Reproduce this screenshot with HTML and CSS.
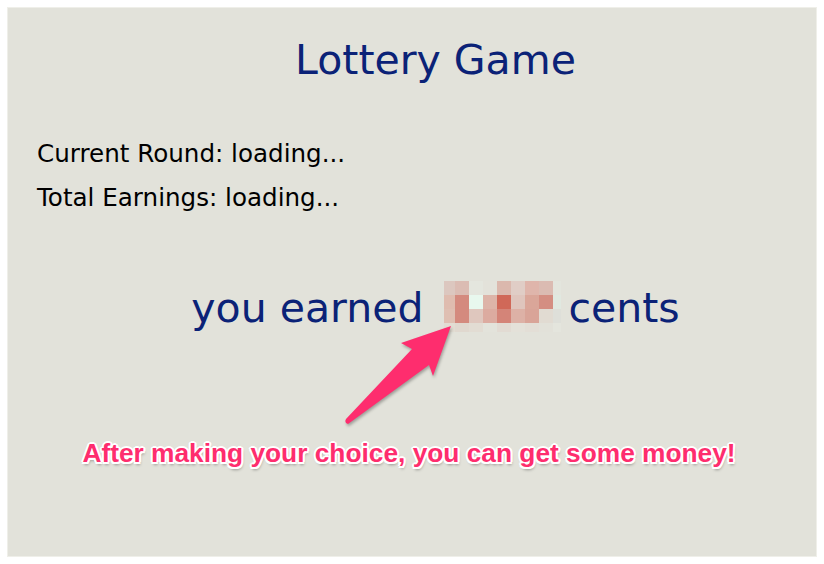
FILE: index.html
```html
<!DOCTYPE html>
<html>
<head>
<meta charset="utf-8">
<title>Lottery Game</title>
<link rel="stylesheet" href="styles.css">
</head>
<body>
<div class="panel">
  <h1 class="title">Lottery Game</h1>
  <div class="info">
    <p class="info-line">Current Round: loading...</p>
    <p class="info-line">Total Earnings: loading...</p>
  </div>
  <p class="earned">you earned<span class="mosaic"><i></i><i></i><i></i><i></i><i></i><i></i><i></i><i></i><i></i><i></i><i></i><i></i><i></i><i></i><i></i><i></i><i></i><i></i><i></i><i></i><i></i><i></i><i></i><i></i><i></i><i></i><i></i><i></i><i></i><i></i><i></i><i></i><i></i><i></i><i></i><i></i></span>cents</p>
  <p class="caption">After making your choice, you can get some money!</p>
  <svg class="arrow" viewBox="330 315 140 120" width="140" height="120">
    <path d="M451 326 L401 343 L412 349 L346 419 Q344 423 348 424 L429 365 L433 376 Z" fill="#fe2d6e"/>
  </svg>
</div>
</body>
</html>
```

FILE: styles.css
```css
html, body {
  margin: 0;
  padding: 0;
  background: #ffffff;
}
body {
  padding: 8px;
}
.panel {
  position: relative;
  box-sizing: border-box;
  width: 808px;
  height: 548px;
  background: #e2e2da;
  outline: 1px solid #efefe9;
  padding-top: 28px;
  font-family: "DejaVu Sans", Verdana, sans-serif;
}
.title {
  margin: 0;
  padding-left: 47px;
  text-align: center;
  font-weight: normal;
  font-size: 41px;
  line-height: 48px;
  color: #0b2277;
}
.info {
  margin-top: 48px;
  padding-left: 29px;
}
.info-line {
  margin: 0;
  font-size: 24.6px;
  line-height: 44px;
  color: #000;
}
.earned {
  margin: 61px 0 0;
  padding-left: 47px;
  text-align: center;
  font-size: 41px;
  line-height: 48px;
  color: #0b2277;
}
.mosaic {
  display: inline-grid;
  grid-template-columns: 11px repeat(7, 14px) 8px;
  grid-template-rows: repeat(3, 14px) 9px;
  vertical-align: 27px;
  margin: 0 7px 0 21px;
}
.mosaic i { display: block; }
.mosaic i:nth-child(1) { background: #dcc7bf; }
.mosaic i:nth-child(2) { background: #dbbcb3; }
.mosaic i:nth-child(3) { background: #e4e6de; }
.mosaic i:nth-child(4) { background: #e3e2da; }
.mosaic i:nth-child(5) { background: #dbb8ad; }
.mosaic i:nth-child(6) { background: #e0cdc6; }
.mosaic i:nth-child(7) { background: #dfb5ab; }
.mosaic i:nth-child(8) { background: #dbbbb2; }
.mosaic i:nth-child(9) { background: #e3e5dd; }
.mosaic i:nth-child(10) { background: #dfbcaf; }
.mosaic i:nth-child(11) { background: #d48a7e; }
.mosaic i:nth-child(12) { background: #e8f8ee; }
.mosaic i:nth-child(13) { background: #ddb4a8; }
.mosaic i:nth-child(14) { background: #d06858; }
.mosaic i:nth-child(15) { background: #dfc5bd; }
.mosaic i:nth-child(16) { background: #daa699; }
.mosaic i:nth-child(17) { background: #d48e82; }
.mosaic i:nth-child(18) { background: #e0e8e0; }
.mosaic i:nth-child(19) { background: #dfbfb2; }
.mosaic i:nth-child(20) { background: #d48a7e; }
.mosaic i:nth-child(21) { background: #dfc7be; }
.mosaic i:nth-child(22) { background: #dcaba0; }
.mosaic i:nth-child(23) { background: #d48478; }
.mosaic i:nth-child(24) { background: #ddb1a6; }
.mosaic i:nth-child(25) { background: #d9a498; }
.mosaic i:nth-child(26) { background: #e1dbd2; }
.mosaic i:nth-child(27) { background: #dedfd9; }
.mosaic i:nth-child(28) { background: #e2ddd3; }
.mosaic i:nth-child(29) { background: #e0d8cf; }
.mosaic i:nth-child(30) { background: #e2dcd3; }
.mosaic i:nth-child(31) { background: #e3e3db; }
.mosaic i:nth-child(32) { background: #e2dbd3; }
.mosaic i:nth-child(33) { background: #e4e1d9; }
.mosaic i:nth-child(34) { background: #e3ded6; }
.mosaic i:nth-child(35) { background: #e2e1d9; }
.mosaic i:nth-child(36) { background: #e4e5dd; }
.caption {
  margin: 106px 0 0;
  padding-right: 6px;
  text-align: center;
  font-family: "Liberation Sans", Arial, sans-serif;
  font-weight: bold;
  font-size: 26.3px;
  line-height: 30px;
  color: #fe2d6e;
  text-shadow:
    -2px 0 0 #fff, 2px 0 0 #fff, 0 -2px 0 #fff, 0 2px 0 #fff,
    -1.5px -1.5px 0 #fff, 1.5px -1.5px 0 #fff, -1.5px 1.5px 0 #fff, 1.5px 1.5px 0 #fff,
    1px 3px 3px rgba(0, 0, 0, 0.35);
}
.arrow {
  position: absolute;
  left: 322px;
  top: 307px;
  filter: drop-shadow(1px 2px 1.5px rgba(0, 0, 0, 0.3));
}
```
